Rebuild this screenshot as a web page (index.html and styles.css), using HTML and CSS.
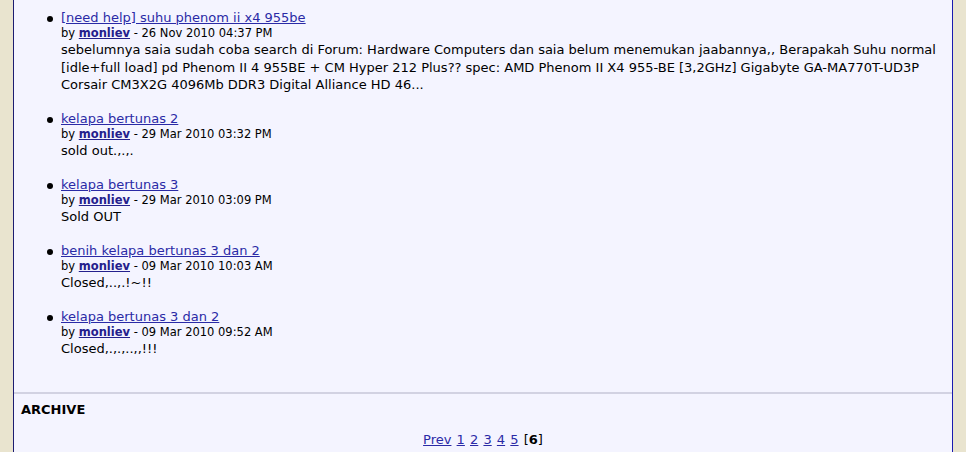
FILE: index.html
```html
<!DOCTYPE html>
<html lang="id">
<head>
  <meta charset="UTF-8" />
  <meta name="viewport" content="width=device-width, initial-scale=1.0" />
  <title>monliev - Marketplace</title>
  <link rel="stylesheet" href="styles.css">
</head>
<body>
  <div class="page">
    <ul class="posts">
      <li>
        <a class="title" href="#">[need help] suhu phenom ii x4 955be</a>
        <div class="meta">by <a class="user" href="#">monliev</a> - 26 Nov 2010 04:37 PM</div>
        <div class="body">sebelumnya saia sudah coba search di Forum: Hardware Computers dan saia belum menemukan jaabannya,, Berapakah Suhu normal [idle+full load] pd Phenom II 4 955BE + CM Hyper 212 Plus?? spec: AMD Phenom II X4 955-BE [3,2GHz] Gigabyte GA-MA770T-UD3P Corsair CM3X2G 4096Mb DDR3 Digital Alliance HD 46...</div>
      </li>
      <li>
        <a class="title" href="#">kelapa bertunas 2</a>
        <div class="meta">by <a class="user" href="#">monliev</a> - 29 Mar 2010 03:32 PM</div>
        <div class="body">sold out.,.,.</div>
      </li>
      <li>
        <a class="title" href="#">kelapa bertunas 3</a>
        <div class="meta">by <a class="user" href="#">monliev</a> - 29 Mar 2010 03:09 PM</div>
        <div class="body">Sold OUT</div>
      </li>
      <li>
        <a class="title" href="#">benih kelapa bertunas 3 dan 2</a>
        <div class="meta">by <a class="user" href="#">monliev</a> - 09 Mar 2010 10:03 AM</div>
        <div class="body">Closed,..,.!~!!</div>
      </li>
      <li>
        <a class="title" href="#">kelapa bertunas 3 dan 2</a>
        <div class="meta">by <a class="user" href="#">monliev</a> - 09 Mar 2010 09:52 AM</div>
        <div class="body">Closed,.,.,..,,!!!</div>
      </li>
    </ul>

    <div class="archive">
      <h3>ARCHIVE</h3>
      <div class="pager">
        <a href="#">Prev</a> <a href="#">1</a> <a href="#">2</a> <a href="#">3</a> <a href="#">4</a> <a href="#">5</a> [<b>6</b>]
      </div>
    </div>
  </div>
</body>
</html>
```

FILE: styles.css
```css
body { margin: 0; background: #e9e4cf; font-family: "DejaVu Sans", Verdana, sans-serif; font-size: 13px; color: #000; }
a { color: #2a2aa6; }
.page { margin: 0 13px; background: #f4f4ff; border-left: 1px solid #1c1c70; border-right: 1px solid #1a1ab0; min-height: 452px; }
.posts { margin: 0; padding: 10px 0 0 47px; list-style: none; }
.posts li { margin-bottom: 17.5px; line-height: 16px; position: relative; }
.posts li::before { content: ""; position: absolute; left: -14px; top: 6px; width: 6px; height: 6px; border-radius: 50%; background: #000; }
.posts .title { display: block; line-height: 16px; }
.meta { font-size: 11.5px; line-height: 15px; }
.meta .user { font-weight: bold; color: #24208c; }
.body { line-height: 17.5px; }
.archive { border-top: 2px solid #d2d2e2; margin-top: 34px; padding: 8px 7px 8px; }
.archive h3 { margin: 0 0 14px; font-size: 13px; line-height: 16px; }
.pager { text-align: center; line-height: 16px; word-spacing: 1px; }
.pager b { font-weight: bold; }
```
